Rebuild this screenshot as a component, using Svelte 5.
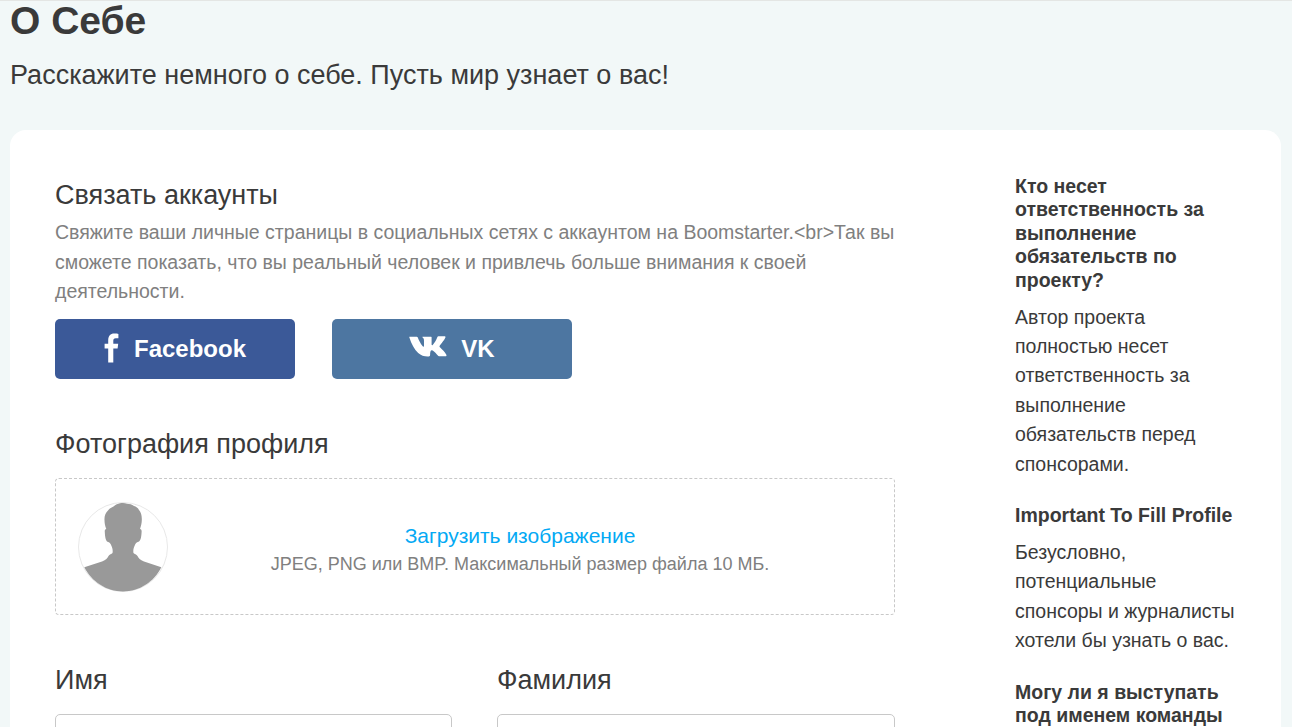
<script>
    const faq = [
        {
            q: "Кто несет ответственность за выполнение обязательств по проекту?",
            a: "Автор проекта полностью несет ответственность за выполнение обязательств перед спонсорами."
        },
        {
            q: "Important To Fill Profile",
            a: "Безусловно, потенциальные спонсоры и журналисты хотели бы узнать о вас."
        },
        {
            q: "Могу ли я выступать под именем команды или компании?",
            a: "Да, вы можете указать название команды или компании."
        }
    ];
</script>

<div class="page">
    <h1>О Себе</h1>
    <p class="lead">Расскажите немного о себе. Пусть мир узнает о вас!</p>

    <div class="card">
        <div class="main">
            <h2>Связать аккаунты</h2>
            <p class="hint">Свяжите ваши личные страницы в социальных сетях с аккаунтом на Boomstarter.&lt;br&gt;Так вы сможете показать, что вы реальный человек и привлечь больше внимания к своей деятельности.</p>
            <div class="socials">
                <button class="social fb">
                    <svg class="fb-icon" width="15" height="30" viewBox="0 0 15 30"><path fill="#fff" d="M4.2 29.5V15.6H0.6v-4.8h3.6V7.4C4.2 3 6.4 0.6 10.2 0.6c1.7 0 3.4 0.1 4.2 0.3v4.4h-2.6c-2 0-2.5 1-2.5 2.4v3.1h4.9l-0.6 4.8H9.300v13.900z"/></svg>
                    Facebook
                </button>
                <button class="social vk">
                    <svg class="vk-icon" width="38" height="21" viewBox="0 0 38 21"><path fill="#fff" d="M0.500 0.700C0.300 0.700 0.200 1 0.300 1.300 2.600 8.400 5.200 13.300 9.200 16.900c3 2.700 6.400 3.700 10.500 3.500 1 0 1.400-0.500 1.400-1.300 0-2.500 0.300-4.700 1.400-4.900 1.200-0.200 3.300 1.700 5.400 4.300 1 1.300 1.800 1.800 3.200 1.800h5.200c1.200 0 1.600-0.800 0.900-1.900-1.600-2.500-3.700-4.600-6-6.900-0.900-0.900-0.900-1.300-0.200-2.300 1.800-2.400 4.100-5 5.300-7.500 0.400-0.900 0.200-1.500-0.900-1.500h-5.500c-0.900 0-1.300 0.300-1.600 1.100-1.200 3-2.700 5.700-4.600 7.600-0.500 0.500-1.100 0.500-1.100-0.400V1.200c0-0.300-0.200-0.500-0.500-0.500h-8.400c-0.300 0-0.400 0.500-0.100 0.800 1.300 1 1.400 2.100 1.400 3.600v4.300c0 1.600-0.700 1.700-1.500 0.700C11.400 7.500 9.900 4.500 8.800 1.600 8.600 1 8.200 0.700 7.700 0.700z"/></svg>
                    VK
                </button>
            </div>

            <h2 class="photo-title">Фотография профиля</h2>
            <div class="upload">
                <svg class="avatar" width="90" height="90" viewBox="0 0 90 90">
                    <circle cx="45" cy="45" r="44.500" fill="#fff" stroke="#e8e8e8"/>
                    <path fill="#999" d="M6.300 65.300L24 59.500C28 58 29.500 56 30.500 54C31.500 52.500 33.500 52 34.500 51C35 49 34.500 46 33.500 44C32.500 41.500 31.500 40 29.500 39.800C27.500 38.500 27 34 26.800 30C26.600 28 27 27.300 28.300 27C27 24 26.500 21 26.500 18C26.200 14 27.500 11 30 8.500C31.500 6.500 33.500 5.500 35.500 4.500C37.500 2.500 40 2 42 1.300C45 0.600 47 1 49 1.800C51.500 2 54 2.500 56 4C58 4.500 60 6 61 8C63 10 64 14 63.800 18C63.800 21 63 24 62 27C63.500 27.300 63.800 28.500 63.600 30C63.400 34 63 38.500 60.500 39.800C58.500 40 57.500 41.500 56.500 44C55.500 46 55 49 55.500 51C56.500 52 58.500 52.500 59.500 54C60.500 56 62 58 66 59.500L83.300 65.300C76 80 61.500 89.500 45 89.500C28.500 89.500 14 80 6.300 65.300Z"/>
                </svg>
                <div class="upload-text">
                    <span class="upload-link">Загрузить изображение</span>
                    <span class="upload-note">JPEG, PNG или BMP. Максимальный размер файла 10 МБ.</span>
                </div>
            </div>

            <div class="names">
                <div class="field">
                    <h2>Имя</h2>
                    <div class="input"></div>
                </div>
                <div class="field">
                    <h2>Фамилия</h2>
                    <div class="input"></div>
                </div>
            </div>
        </div>

        <aside class="side">
            {#each faq as item}
                <h3>{item.q}</h3>
                <p>{item.a}</p>
            {/each}
        </aside>
    </div>
</div>

<style>
    :global(body) {
        margin: 0;
        background: #f2f8f8;
        overflow: hidden;
        height: 727px;
    }

    .page {
        box-sizing: border-box;
        height: 727px;
        overflow: hidden;
        border-top: 1px solid #e4e6e4;
        padding: 0 11px 0 10px;
        font-family: "Liberation Sans", Arial, sans-serif;
        color: #3a3a3a;
    }

    h1 {
        margin: 0;
        font-size: 39px;
        line-height: 40px;
        font-weight: 700;
    }

    .lead {
        margin: 14px 0 0;
        font-size: 27px;
        line-height: 40px;
    }

    .card {
        display: flex;
        margin-top: 35px;
        padding: 46px 45px 0;
        background: #fff;
        border-radius: 16px;
        height: 700px;
    }

    .main {
        width: 840px;
        flex: none;
        padding-top: 1px;
    }

    h2 {
        margin: 0;
        font-size: 27px;
        line-height: 36px;
        font-weight: 400;
    }

    .hint {
        margin: 5px 0 0;
        font-size: 19.500px;
        line-height: 29.700px;
        color: #808080;
    }

    .socials {
        display: flex;
        gap: 37px;
        margin-top: 12px;
    }

    .social {
        display: flex;
        align-items: center;
        justify-content: center;
        width: 240px;
        height: 60px;
        padding: 0;
        border: 0;
        border-radius: 5px;
        color: #fff;
        font-family: inherit;
        font-size: 24px;
        font-weight: 700;
    }

    .fb {
        background: #3b5998;
        gap: 15px;
    }

    .vk {
        background: #4d76a1;
        gap: 14px;
    }

    .fb-icon {
        margin-bottom: 3px;
    }

    .vk-icon {
        margin-bottom: 6px;
    }

    .photo-title {
        margin-top: 47px;
    }

    .upload {
        display: flex;
        align-items: center;
        box-sizing: border-box;
        height: 137px;
        margin-top: 16px;
        padding: 0 22px;
        border: 1px dashed #c8c8c8;
        border-radius: 4px;
    }

    .avatar {
        flex: none;
    }

    .upload-text {
        flex: 1;
        display: flex;
        flex-direction: column;
        align-items: center;
        padding-top: 6px;
    }

    .upload-link {
        font-size: 21px;
        line-height: 28px;
        color: #03a9f4;
    }

    .upload-note {
        font-size: 18px;
        line-height: 28px;
        color: #808080;
    }

    .names {
        display: grid;
        grid-template-columns: 397px 398px;
        gap: 45px;
        margin-top: 47px;
    }

    .input {
        height: 50px;
        margin-top: 16px;
        border: 1px solid #c8c8c8;
        border-radius: 5px;
    }

    .side {
        width: 222px;
        margin-left: 120px;
        flex: none;
    }

    h3 {
        margin: -1px 0 0;
        font-size: 19.500px;
        line-height: 23.400px;
        font-weight: 700;
    }

    .side p {
        margin: 10.500px 0 26px;
        font-size: 19.500px;
        line-height: 29.400px;
    }
</style>
